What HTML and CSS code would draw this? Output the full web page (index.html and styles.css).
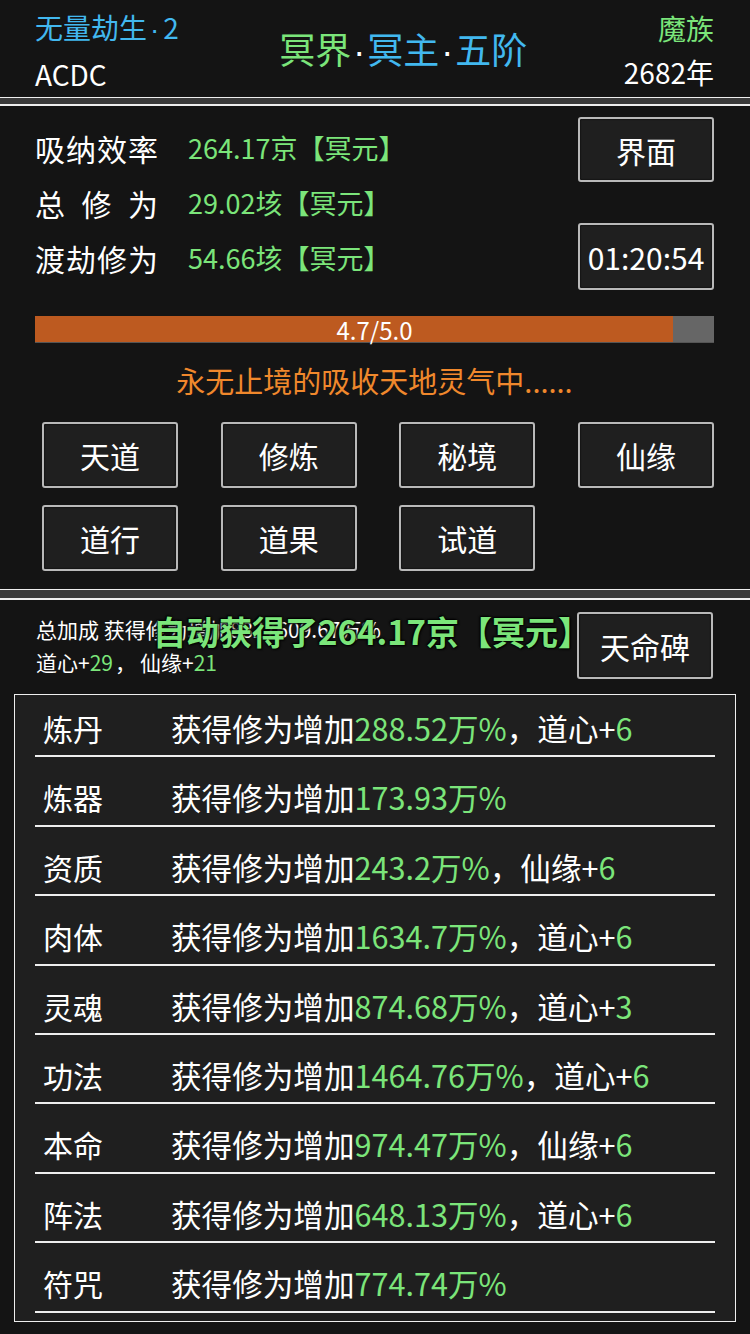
FILE: index.html
```html
<!DOCTYPE html>
<html lang="zh-CN">
<head>
  <meta charset="UTF-8">
  <meta name="viewport" content="width=device-width, initial-scale=1.0">
  <title>修仙</title>
  <link rel="stylesheet" href="styles.css">
</head>
<body>
  <div class="page">
    <header class="top">
      <div class="top-side">
        <div class="blue">无量劫生<span class="dot">·</span>2</div>
        <div>ACDC</div>
      </div>
      <div class="title"><span class="green">冥界</span><span class="dot">·</span><span class="blue">冥主</span><span class="dot">·</span><span class="blue">五阶</span></div>
      <div class="top-side right">
        <div class="green">魔族</div>
        <div>2682年</div>
      </div>
    </header>

    <div class="divider"></div>

    <section class="panel main">
      <div class="stat-row">
        <ul class="stats">
          <li><span class="label">吸纳效率</span><span class="val green">264.17京【冥元】</span></li>
          <li><span class="label">总修为</span><span class="val green">29.02垓【冥元】</span></li>
          <li><span class="label">渡劫修为</span><span class="val green">54.66垓【冥元】</span></li>
        </ul>
        <div class="side-btns">
          <div class="btn">界面</div>
          <div class="btn timer">01:20:54</div>
        </div>
      </div>

      <div class="progress">
        <span class="fill" style="width:94%"></span>
        <span class="progress-txt">4.7/5.0</span>
      </div>

      <p class="status">永无止境的吸收天地灵气中......</p>

      <div class="menu">
        <div class="btn">天道</div>
        <div class="btn">修炼</div>
        <div class="btn">秘境</div>
        <div class="btn">仙缘</div>
        <div class="btn">道行</div>
        <div class="btn">道果</div>
        <div class="btn">试道</div>
      </div>
    </section>

    <div class="divider wide"></div>

    <section class="panel bonus">
      <div class="bonus-head">
        <div class="bonus-txt">
          <p>总加成 获得修为增加8827609.67万%</p>
          <p>道心+<span class="green">29</span><span class="comma">，</span>仙缘+<span class="green">21</span></p>
        </div>
        <div class="btn">天命碑</div>
      </div>
      <div class="toast">自动获得了264.17京【冥元】</div>

      <ul class="list">
        <li><span class="name">炼丹</span><span>获得修为增加<span class="green">288.52万%</span>，道心+<span class="green">6</span></span></li>
        <li><span class="name">炼器</span><span>获得修为增加<span class="green">173.93万%</span></span></li>
        <li><span class="name">资质</span><span>获得修为增加<span class="green">243.2万%</span>，仙缘+<span class="green">6</span></span></li>
        <li><span class="name">肉体</span><span>获得修为增加<span class="green">1634.7万%</span>，道心+<span class="green">6</span></span></li>
        <li><span class="name">灵魂</span><span>获得修为增加<span class="green">874.68万%</span>，道心+<span class="green">3</span></span></li>
        <li><span class="name">功法</span><span>获得修为增加<span class="green">1464.76万%</span>，道心+<span class="green">6</span></span></li>
        <li><span class="name">本命</span><span>获得修为增加<span class="green">974.47万%</span>，仙缘+<span class="green">6</span></span></li>
        <li><span class="name">阵法</span><span>获得修为增加<span class="green">648.13万%</span>，道心+<span class="green">6</span></span></li>
        <li><span class="name">符咒</span><span>获得修为增加<span class="green">774.74万%</span></span></li>
      </ul>
    </section>
  </div>
</body>
</html>
```

FILE: styles.css
```css
* {margin:0; padding:0; box-sizing:border-box}
ul,li {list-style:none}
body {background:#111; color:#fff; font-family:"Noto Sans CJK SC", "Noto Sans", sans-serif;}
.page {width:750px; height:1334px; overflow:hidden; background:#141414;}

.green {color:#7be57a;}
.blue {color:#42b8ef;}
.dot {font-family:"Liberation Sans", sans-serif; color:#fff; padding:0 2px;}
.blue .dot {color:inherit; padding:0 4px 0 3px;}

/* header */
.top {display:flex; justify-content:space-between; align-items:center; height:97px; padding:6px 36px 3px 35px; font-size:28px; line-height:44px;}
.top-side.right {text-align:right;}
.title {padding-left:4px; font-size:36px; line-height:44px;}

.divider {height:9px; border-top:1px solid #eee; border-bottom:2px solid #eee; background:#3a3a3a;}
.divider.wide {height:11px;}

.panel {position:relative; background:#141414;}

/* main panel */
.main {height:483px; padding:11px 36px 0 35px;}
.stat-row {display:flex; justify-content:space-between;}
.stats {padding-top:4px; font-size:30px; line-height:54px;}
.stats li {display:flex;}
.stats li + li {margin-top:1px;}
.stats .label {width:123px; margin-right:30px; text-align:justify; text-align-last:justify;}
.stats .val {font-size:27px;}

.side-btns {display:flex; flex-direction:column; gap:41px;}
.btn {display:flex; align-items:center; justify-content:center; width:136px; height:65px; border:2px solid #b9b9b9; border-radius:3px; background:#1f1f1f; box-shadow:inset 0 0 2px #000; font-size:30px; color:#fff;}
.btn.timer {height:67px;}

.progress {position:relative; height:27px; margin-top:26px; background:#666; border-bottom:1px solid #555;}
.progress .fill {position:absolute; left:0; top:0; height:100%; background:#bd5a20;}
.progress .progress-txt {position:relative; display:block; text-align:center; font-size:24px; line-height:27px;}

.status {margin-top:19px; text-align:center; font-size:29px; line-height:36px; color:#f0882c;}

.menu {display:grid; grid-template-columns:repeat(4, 136px); justify-content:space-between; row-gap:17px; margin:24px 0 0 7px;}
.menu .btn {height:66px;}

/* bonus panel */
.bonus {height:734px; padding:12px 14px 0 14px;}
.bonus-head {display:flex; justify-content:space-between; padding:0 23px 0 22px;}
.bonus-txt {padding-top:1px; font-size:21px; line-height:33px;}
.bonus-txt .comma {padding:0 4px 0 2px;}
.bonus-head .btn {height:67px;}
.toast {position:absolute; left:153px; top:9px; font-size:33px; font-weight:bold; line-height:44px; color:#7be57a; text-shadow:0 0 2px #000, 1px 1px 2px #000, -1px -1px 2px #000;}

.list {margin-top:15px; height:628px; padding:0 20px; border:1px solid #eee; background:#1f1f1f;}
.list li {display:flex; height:69.4px; padding-top:23px; border-bottom:2px solid #eee; font-size:30.6px; line-height:34px;}
.list li:first-child {height:62.4px; padding-top:16px;}
.list .name {width:136px; padding-left:8px; font-size:30px;}
```
